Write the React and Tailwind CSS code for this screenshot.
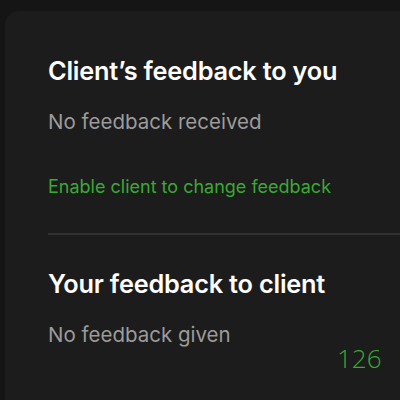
export default function App() {
  return (
    <div className="h-[400px] w-[400px] overflow-hidden bg-[#151515] pt-[11px] pl-[5px]" style={{ fontFamily: 'Inter, "Liberation Sans", sans-serif' }}>
      <div className="relative h-[400px] rounded-tl-[14px] bg-[#1c1c1c] pl-[43px]">
        <div className="pt-[45px]">
          <h2 className="text-[25.3px] font-semibold leading-[30px] tracking-[-0.2px] text-white">Client’s feedback to you</h2>
          <p className="mt-[23px] text-[20.5px] leading-[26px] text-[#9b9b9b]">No feedback received</p>
          <p className="mt-[41px] text-[18px] leading-[22px] text-[#3aa934]">Enable client to change feedback</p>
        </div>
        <div className="mt-[35px] h-[2px] bg-[#313131]" />
        <div className="pt-[34px]">
          <h2 className="text-[25.3px] font-semibold leading-[30px] tracking-[-0.2px] text-white">Your feedback to client</h2>
          <p className="mt-[23px] text-[20.5px] leading-[26px] text-[#9b9b9b]">No feedback given</p>
        </div>
        <span className="absolute left-[332px] top-[334px] text-[26px] font-light leading-none text-[#3aa934]" style={{ fontFamily: '"Open Sans", sans-serif' }}>126</span>
      </div>
    </div>
  );
}
